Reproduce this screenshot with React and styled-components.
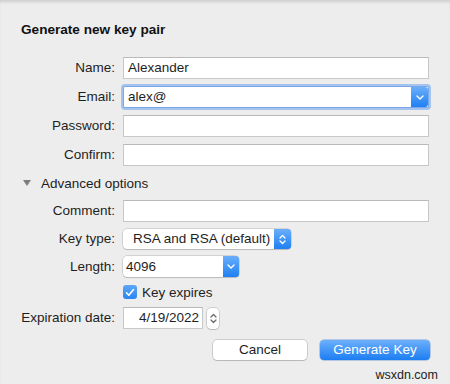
import React from "react";
import styled, { createGlobalStyle, css } from "styled-components";

const Global = createGlobalStyle`
  html, body { margin: 0; padding: 0; background: #ededed; }
  body { font-family: "Liberation Sans", Arial, Helvetica, sans-serif; color: #1e1e1e; }
`;

const Dialog = styled.div`
  position: relative;
  width: 450px;
  height: 384px;
  box-sizing: border-box;
  padding: 22px 21px 0 21px;
  background: #ededed;
  box-shadow: inset 0 3px 3px -1px rgba(0, 0, 0, 0.13);
  overflow: hidden;
`;

const Title = styled.div`
  font-size: 13.6px;
  font-weight: bold;
  line-height: 16px;
  color: #111;
  margin-bottom: 19px;
`;

const Form = styled.div`
  display: grid;
  grid-template-columns: 94px 1fr;
  column-gap: 8px;
  row-gap: 7px;
  align-items: center;
`;

const Label = styled.div`
  text-align: right;
  font-size: 13.5px;
  line-height: 16px;
  color: #1e1e1e;
  white-space: nowrap;
`;

const Field = styled.div`
  height: 22px;
  box-sizing: border-box;
  background: #fff;
  border: 1px solid #c8c8c8;
  border-top-color: #b9b9b9;
  padding: 0 4px;
  font-size: 13.5px;
  line-height: 20px;
  color: #1e1e1e;
  white-space: nowrap;
  ${(p) => p.$width && css`width: ${p.$width}px;`}
  ${(p) => p.$right && css`text-align: right; padding-right: 3px;`}
`;

const Combo = styled.div`
  display: flex;
  height: 22px;
  box-sizing: border-box;
  border: 1px solid #7ba7e8;
  border-radius: 2px;
  background: #fff;
  box-shadow: 0 0 0 2px rgba(104, 160, 240, 0.55);
`;

const ComboText = styled.div`
  flex: 1;
  padding: 0 4px;
  font-size: 13.5px;
  line-height: 20px;
`;

const BlueButton = styled.div`
  width: ${(p) => p.$w || 17}px;
  display: flex;
  align-items: center;
  justify-content: center;
  background: linear-gradient(#6aaefa, #1f80f2);
  border-radius: 0 3px 3px 0;
`;

const Disclosure = styled.div`
  grid-column: 1 / -1;
  display: flex;
  align-items: center;
  height: 20px;
  padding-left: 2px;
  font-size: 13.5px;
  gap: 10px;
`;

const Triangle = styled.span`
  width: 0;
  height: 0;
  border-left: 4px solid transparent;
  border-right: 4px solid transparent;
  border-top: 6px solid #7d7d7d;
`;

const PopUp = styled.div`
  display: flex;
  justify-self: start;
  width: ${(p) => p.$width}px;
  height: ${(p) => p.$height}px;
  box-sizing: border-box;
  background: #fff;
  border-radius: 4px;
  box-shadow: 0 0 0 0.5px rgba(0, 0, 0, 0.22), 0 1px 1px rgba(0, 0, 0, 0.12);
`;

const PopText = styled.div`
  flex: 1;
  padding-left: ${(p) => p.$pad}px;
  font-size: 13.5px;
  line-height: ${(p) => p.$lh}px;
  white-space: nowrap;
`;

const CheckRow = styled.div`
  grid-column: 2;
  display: flex;
  align-items: center;
  gap: 5px;
  height: 16px;
  font-size: 13.5px;
`;

const Checkbox = styled.div`
  width: 14px;
  height: 14px;
  border-radius: 3px;
  background: linear-gradient(#5ea6f8, #2a86f0);
  display: flex;
  align-items: center;
  justify-content: center;
`;

const DateRow = styled.div`
  display: flex;
  align-items: center;
  gap: 4px;
`;

const Stepper = styled.div`
  width: 12px;
  height: 21px;
  box-sizing: border-box;
  background: #fff;
  border-radius: 4px;
  box-shadow: 0 0 0 0.5px rgba(0, 0, 0, 0.25), 0 1px 1px rgba(0, 0, 0, 0.1);
  display: flex;
  align-items: center;
  justify-content: center;
`;

const Buttons = styled.div`
  grid-column: 1 / -1;
  display: flex;
  justify-content: flex-end;
  gap: 13px;
  margin-top: 4px;
  margin-right: -1px;
`;

const PushButton = styled.div`
  width: ${(p) => p.$width}px;
  height: 20px;
  box-sizing: border-box;
  border-radius: 4px;
  font-size: 13.5px;
  line-height: 20px;
  text-align: center;
  ${(p) =>
    p.$primary
      ? css`
          background: linear-gradient(#6cb0fb, #1c7ef2);
          color: #fff;
          box-shadow: 0 0 0 0.5px rgba(20, 90, 200, 0.5);
        `
      : css`
          background: #fff;
          color: #1e1e1e;
          box-shadow: 0 0 0 0.5px rgba(0, 0, 0, 0.28), 0 1px 1px rgba(0, 0, 0, 0.1);
        `}
`;

const Watermark = styled.div`
  position: absolute;
  right: 12px;
  bottom: 2px;
  font-size: 12.5px;
  color: #222;
`;

const ChevronDown = () => (
  <svg width="8" height="5" viewBox="0 0 8 5">
    <path d="M1 1 L4 4 L7 1" fill="none" stroke="#fff" strokeWidth="1.4" strokeLinecap="round" strokeLinejoin="round" />
  </svg>
);

const UpDown = ({ color = "#fff" }) => (
  <svg width="7" height="11" viewBox="0 0 7 11">
    <path d="M1 4 L3.5 1.5 L6 4 M1 7 L3.5 9.5 L6 7" fill="none" stroke={color} strokeWidth="1.3" strokeLinecap="round" strokeLinejoin="round" />
  </svg>
);

const Check = () => (
  <svg width="10" height="9" viewBox="0 0 10 9">
    <path d="M1.5 4.8 L3.8 7.2 L8.5 1.5" fill="none" stroke="#fff" strokeWidth="1.6" strokeLinecap="round" strokeLinejoin="round" />
  </svg>
);

export default function App() {
  return (
    <>
      <Global />
      <Dialog>
        <Title>Generate new key pair</Title>
        <Form>
          <Label>Name:</Label>
          <Field>Alexander</Field>

          <Label>Email:</Label>
          <Combo>
            <ComboText>alex@</ComboText>
            <BlueButton>
              <ChevronDown />
            </BlueButton>
          </Combo>

          <Label>Password:</Label>
          <Field />

          <Label>Confirm:</Label>
          <Field />

          <Disclosure>
            <Triangle />
            Advanced options
          </Disclosure>

          <Label>Comment:</Label>
          <Field />

          <Label>Key type:</Label>
          <PopUp $width={168} $height={20}>
            <PopText $pad={10} $lh={20}>RSA and RSA (default)</PopText>
            <BlueButton $w={17}>
              <UpDown />
            </BlueButton>
          </PopUp>

          <Label>Length:</Label>
          <PopUp $width={116} $height={21}>
            <PopText $pad={3} $lh={21}>4096</PopText>
            <BlueButton $w={16}>
              <ChevronDown />
            </BlueButton>
          </PopUp>

          <CheckRow>
            <Checkbox>
              <Check />
            </Checkbox>
            Key expires
          </CheckRow>

          <Label>Expiration date:</Label>
          <DateRow>
            <Field $width={80} $right>4/19/2022</Field>
            <Stepper>
              <UpDown color="#6a6a6a" />
            </Stepper>
          </DateRow>

          <Buttons>
            <PushButton $width={94}>Cancel</PushButton>
            <PushButton $width={110} $primary>Generate Key</PushButton>
          </Buttons>
        </Form>
        <Watermark>wsxdn.com</Watermark>
      </Dialog>
    </>
  );
}
